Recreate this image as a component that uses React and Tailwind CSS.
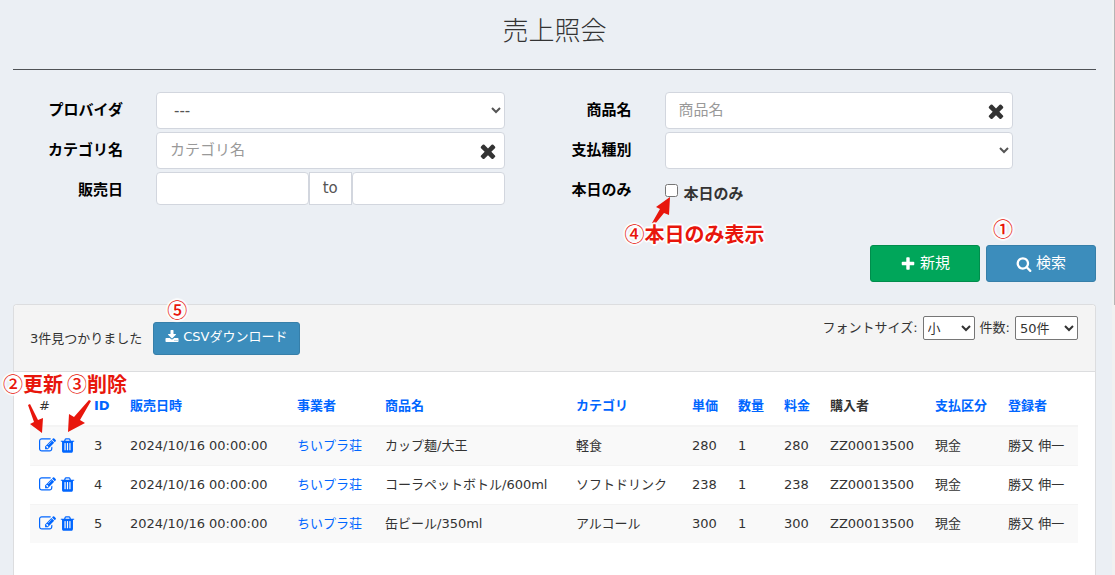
import { useState } from 'react';

const ICONS = {
    edit: 'M888 1184l116-116-152-152-116 116v56h96v96h56zm440-720q-16-16-33 1l-350 350q-17 17-1 33t33-1l350-350q17-17 1-33zm80 594v190q0 119-84.5 203.5t-203.5 84.5h-832q-119 0-203.5-84.5t-84.5-203.5v-832q0-119 84.5-203.5t203.5-84.5h832q63 0 117 25 15 7 18 23 3 17-9 29l-49 49q-14 14-32 8-23-6-45-6h-832q-66 0-113 47t-47 113v832q0 66 47 113t113 47h832q66 0 113-47t47-113v-126q0-13 9-22l64-64q15-15 35-7t20 29zm-96-738l288 288-672 672h-288v-288zm444 132l-92 92-288-288 92-92q28-28 68-28t68 28l152 152q28 28 28 68t-28 68z',
    trash: 'M704 1376v-704q0-14-9-23t-23-9h-64q-14 0-23 9t-9 23v704q0 14 9 23t23 9h64q14 0 23-9t9-23zm256 0v-704q0-14-9-23t-23-9h-64q-14 0-23 9t-9 23v704q0 14 9 23t23 9h64q14 0 23-9t9-23zm256 0v-704q0-14-9-23t-23-9h-64q-14 0-23 9t-9 23v704q0 14 9 23t23 9h64q14 0 23-9t9-23zm-544-992h448l-48-117q-7-9-17-11h-317q-10 2-17 11zm928 32v64q0 14-9 23t-23 9h-96v948q0 83-47 143.5t-113 60.5h-832q-66 0-113-58.5t-47-141.5v-952h-96q-14 0-23-9t-9-23v-64q0-14 9-23t23-9h309l70-167q15-37 54-63t79-26h320q40 0 79 26t54 63l70 167h309q14 0 23 9t9 23z',
    times: 'M1490 1322q0 40-28 68l-136 136q-28 28-68 28t-68-28l-294-294-294 294q-28 28-68 28t-68-28l-136-136q-28-28-28-68t28-68l294-294-294-294q-28-28-28-68t28-68l136-136q28-28 68-28t68 28l294 294 294-294q28-28 68-28t68 28l136 136q28 28 28 68t-28 68l-294 294 294 294q28 28 28 68z',
    plus: 'M1600 736v192q0 40-28 68t-68 28h-416v416q0 40-28 68t-68 28h-192q-40 0-68-28t-28-68v-416h-416q-40 0-68-28t-28-68v-192q0-40 28-68t68-28h416v-416q0-40 28-68t68-28h192q40 0 68 28t28 68v416h416q40 0 68 28t28 68z',
    search: 'M1216 832q0-185-131.5-316.5t-316.5-131.5-316.5 131.5-131.5 316.5 131.5 316.5 316.5 131.5 316.5-131.5 131.5-316.5zm512 832q0 52-38 90t-90 38q-54 0-90-38l-343-342q-179 124-399 124-143 0-273.5-55.5t-225-150-150-225-55.5-273.5 55.5-273.5 150-225 225-150 273.5-55.5 273.5 55.5 225 150 150 225 55.5 273.5q0 220-124 399l343 343q37 37 37 90z',
    download: 'M1344 1344q0-26-19-45t-45-19-45 19-19 45 19 45 45 19 45-19 19-45zm256 0q0-26-19-45t-45-19-45 19-19 45 19 45 45 19 45-19 19-45zm128-224v320q0 40-28 68t-68 28h-1472q-40 0-68-28t-28-68v-320q0-40 28-68t68-28h465l135 136q58 56 136 56t136-56l136-136h464q40 0 68 28t28 68zm-325-569q17 41-14 70l-448 448q-18 19-45 19t-45-19l-448-448q-31-29-14-70 17-39 59-39h256v-448q0-26 19-45t45-19h256q26 0 45 19t19 45v448h256q42 0 59 39z',
};

const COLUMNS = [
    { label: '販売日時', width: 'w-[167px]', sortable: true },
    { label: '事業者', width: 'w-[88px]', sortable: true },
    { label: '商品名', width: 'w-[191px]', sortable: true },
    { label: 'カテゴリ', width: 'w-[116px]', sortable: true },
    { label: '単価', width: 'w-[46px]', sortable: true },
    { label: '数量', width: 'w-[46px]', sortable: true },
    { label: '料金', width: 'w-[46px]', sortable: true },
    { label: '購入者', width: 'w-[105px]', sortable: false },
    { label: '支払区分', width: 'w-[73px]', sortable: true },
    { label: '登録者', width: 'w-[79px]', sortable: true },
];

const SALES = [
    { id: 3, date: '2024/10/16 00:00:00', provider: 'ちいプラ荘', product: 'カップ麺/大王', category: '軽食', price: 280, count: 1, total: 280, buyer: 'ZZ00013500', payment: '現金', user: '勝又 伸一' },
    { id: 4, date: '2024/10/16 00:00:00', provider: 'ちいプラ荘', product: 'コーラペットボトル/600ml', category: 'ソフトドリンク', price: 238, count: 1, total: 238, buyer: 'ZZ00013500', payment: '現金', user: '勝又 伸一' },
    { id: 5, date: '2024/10/16 00:00:00', provider: 'ちいプラ荘', product: '缶ビール/350ml', category: 'アルコール', price: 300, count: 1, total: 300, buyer: 'ZZ00013500', payment: '現金', user: '勝又 伸一' },
];

const FIELD = 'w-full rounded border border-[#d2d6de] bg-white text-[#555]';

function Icon({ name, className }) {
    return (
        <svg viewBox="0 0 1792 1792" fill="currentColor" aria-hidden="true" className={className}>
            <path d={ICONS[name]} />
        </svg>
    );
}

function FormRow({ label, htmlFor, children }) {
    return (
        <div className="flex">
            <label htmlFor={htmlFor} className="w-[110px] shrink-0 pt-2 text-right text-[15px] leading-5 font-bold text-black">
                {label}
            </label>
            <div className="ml-[33px] min-w-0 flex-1">{children}</div>
        </div>
    );
}

function ClearableInput({ id, placeholder }) {
    const [value, setValue] = useState('');

    return (
        <div className="relative">
            <input
                id={id}
                type="text"
                value={value}
                onChange={(e) => setValue(e.target.value)}
                placeholder={placeholder}
                className={`${FIELD} h-[37px] px-[13px] pb-0.5 text-[15px] placeholder:text-[#999]`}
            />
            <button type="button" aria-label="クリア" onClick={() => setValue('')} className="absolute top-2 right-1.5 text-[#333]">
                <Icon name="times" className="size-[22px]" />
            </button>
        </div>
    );
}

// Red callout text with a white rim
function Note({ number, className, children }) {
    return (
        <span className={`pointer-events-none absolute z-10 font-['Noto_Sans_CJK_JP',sans-serif] text-[20px] leading-6 font-bold whitespace-nowrap text-[#e8160c] [text-shadow:1px_1px_1px_#fff,-1px_-1px_1px_#fff,1px_-1px_1px_#fff,-1px_1px_1px_#fff,0_2px_1px_#fff,0_-2px_1px_#fff,2px_0_1px_#fff,-2px_0_1px_#fff] ${className}`}>
            <span className="font-medium">{number}</span>
            {children}
        </span>
    );
}

function Arrow({ className, viewBox, points }) {
    return (
        <svg viewBox={viewBox} aria-hidden="true" className={`pointer-events-none absolute z-10 overflow-visible ${className}`}>
            <polygon points={points} fill="#e8160c" />
        </svg>
    );
}

export default function App() {
    const [todayOnly, setTodayOnly] = useState(false);

    return (
        <div className="flex min-h-screen bg-[#ebeff4] font-['DejaVu_Sans','Noto_Sans_CJK_JP',sans-serif] text-[13px] text-[#333]">
            <main className="flex min-w-0 flex-1 flex-col pr-4 pl-[13px]">
                <header className="border-b border-[#4f5256] pt-[11px] pb-[22px]">
                    <h1 className="text-center font-['Noto_Sans_CJK_JP',sans-serif] text-[26px] leading-9 font-light">売上照会</h1>
                </header>

                <form onSubmit={(e) => e.preventDefault()} className="pt-[22px]">
                    <div className="grid grid-cols-2 gap-x-[17px] pr-[83px]">
                        <div className="space-y-[3px]">
                            <FormRow label="プロバイダ" htmlFor="provider">
                                <select id="provider" className={`${FIELD} h-[37px] px-[13px] text-[15px]`}>
                                    <option>---</option>
                                </select>
                            </FormRow>
                            <FormRow label="カテゴリ名" htmlFor="category">
                                <ClearableInput id="category" placeholder="カテゴリ名" />
                            </FormRow>
                            <FormRow label="販売日" htmlFor="date-from">
                                <div className="flex">
                                    <input id="date-from" type="text" className={`${FIELD} h-[33px] min-w-0 flex-1 px-3`} />
                                    <span className="flex h-[33px] w-[43px] items-center justify-center border border-[#d2d6de] bg-white text-[15px] text-[#555]">to</span>
                                    <input aria-label="販売日（終了）" type="text" className={`${FIELD} h-[33px] min-w-0 flex-1 px-3`} />
                                </div>
                            </FormRow>
                        </div>

                        <div className="space-y-[3px]">
                            <FormRow label="商品名" htmlFor="product">
                                <ClearableInput id="product" placeholder="商品名" />
                            </FormRow>
                            <FormRow label="支払種別" htmlFor="payment">
                                <select id="payment" className={`${FIELD} h-[37px] px-[13px] text-[15px]`}>
                                    <option></option>
                                </select>
                            </FormRow>
                            <FormRow label="本日のみ" htmlFor="today">
                                <div className="relative">
                                    <label className="flex items-start gap-1.5 pt-3 text-[15px] leading-5 font-bold">
                                        <input id="today" type="checkbox" checked={todayOnly} onChange={(e) => setTodayOnly(e.target.checked)} />
                                        本日のみ
                                    </label>
                                    <Arrow className="top-6 left-[-14px] h-[30px] w-[22px]" viewBox="0 0 22 30" points="19,1 5,11 9,13 1,27 4,28 13,17 18,19" />
                                    <Note number="④" className="top-[50px] left-[-40px]">本日のみ表示</Note>
                                </div>
                            </FormRow>
                        </div>
                    </div>

                    <div className="mt-10 flex justify-end gap-1.5 text-[15px] text-white">
                        <button type="button" className="flex h-[37px] w-[110px] items-center justify-center gap-1 rounded-[3px] border border-[#008d4c] bg-[#00a65a]">
                            <Icon name="plus" className="size-4" />
                            新規
                        </button>
                        <div className="relative">
                            <Note number="①" className="top-[-28px] left-[7px]" />
                            <button type="submit" className="flex h-[37px] w-[110px] items-center justify-center gap-1 rounded-[3px] border border-[#367fa9] bg-[#3c8dbc]">
                                <Icon name="search" className="size-4" />
                                検索
                            </button>
                        </div>
                    </div>
                </form>

                <section className="mt-[22px] flex-1 rounded-t border border-b-0 border-[#dcdddf] bg-white">
                    <div className="flex items-start justify-between rounded-t border-b border-[#dcdddf] bg-[#f4f4f4] pt-[11px] pr-[17px] pb-4 pl-4">
                        <div className="flex items-center gap-[11px] pt-1.5">
                            <span>3件見つかりました</span>
                            <div className="relative">
                                <Note number="⑤" className="top-[-24px] left-[14px]" />
                                <button type="button" className="flex h-[33px] items-center gap-1 rounded-[3px] border border-[#367fa9] bg-[#3c8dbc] px-[11px] pb-1 text-white">
                                    <Icon name="download" className="size-[14px]" />
                                    CSVダウンロード
                                </button>
                            </div>
                        </div>
                        <div className="flex items-center gap-[5px]">
                            <label htmlFor="font-size">フォントサイズ:</label>
                            <select id="font-size" className="h-6 w-[52px] rounded-xs border border-[#767676] bg-white">
                                <option>小</option>
                            </select>
                            <label htmlFor="page-size">件数:</label>
                            <select id="page-size" className="h-6 w-[63px] rounded-xs border border-[#767676] bg-white">
                                <option>50件</option>
                            </select>
                        </div>
                    </div>

                    <div className="relative pt-[14px] pr-[17px] pl-4">
                        <Note number="②" className="top-0 left-[-11px]">更新</Note>
                        <Note number="③" className="top-0 left-[53px]">削除</Note>
                        <Arrow className="top-8 left-[13px] h-[30px] w-[18px]" viewBox="0 0 18 30" points="15,29 3,20 7,18 1,1 3,0 11,16 16,14" />
                        <Arrow className="top-7 left-[52px] h-[34px] w-[26px]" viewBox="0 0 26 34" points="2,32 3,14 8,17 23,0 25,1 14,20 19,23" />

                        <table className="w-full table-fixed border-collapse text-left whitespace-nowrap">
                            <thead>
                                <tr className="h-10 border-b-2 border-[#f4f4f4]">
                                    <th className="w-[55px] pl-[9px] font-normal">#</th>
                                    <th className="w-9 pl-[9px]">
                                        <a href="#id" className="text-[#0066ff]">ID</a>
                                    </th>
                                    {COLUMNS.map((col) => (
                                        <th key={col.label} className={`pl-[9px] ${col.width}`}>
                                            {col.sortable ? <a href={`#${col.label}`} className="text-[#0066ff]">{col.label}</a> : col.label}
                                        </th>
                                    ))}
                                </tr>
                            </thead>
                            <tbody>
                                {SALES.map((sale) => (
                                    <tr key={sale.id} className="border-t border-[#f4f4f4] odd:bg-[#f9f9f9] [&>td]:h-[39px] [&>td]:pl-[9px]">
                                        <td>
                                            <div className="flex gap-[3px] text-[#0066ff]">
                                                <button type="button" aria-label="更新">
                                                    <Icon name="edit" className="size-[17px]" />
                                                </button>
                                                <button type="button" aria-label="削除">
                                                    <Icon name="trash" className="size-[17px]" />
                                                </button>
                                            </div>
                                        </td>
                                        <td>{sale.id}</td>
                                        <td>{sale.date}</td>
                                        <td>
                                            <a href="#provider" className="text-[#0066ff]">{sale.provider}</a>
                                        </td>
                                        <td>{sale.product}</td>
                                        <td>{sale.category}</td>
                                        <td>{sale.price}</td>
                                        <td>{sale.count}</td>
                                        <td>{sale.total}</td>
                                        <td>{sale.buyer}</td>
                                        <td>{sale.payment}</td>
                                        <td>{sale.user}</td>
                                    </tr>
                                ))}
                            </tbody>
                        </table>
                    </div>
                </section>
            </main>

            {/* Scroll track */}
            <div className="flex w-[3px] shrink-0 justify-end bg-[#f1f1f1]">
                <div className="h-[53vh] w-px bg-[#b5b5b5]" />
            </div>
        </div>
    );
}
